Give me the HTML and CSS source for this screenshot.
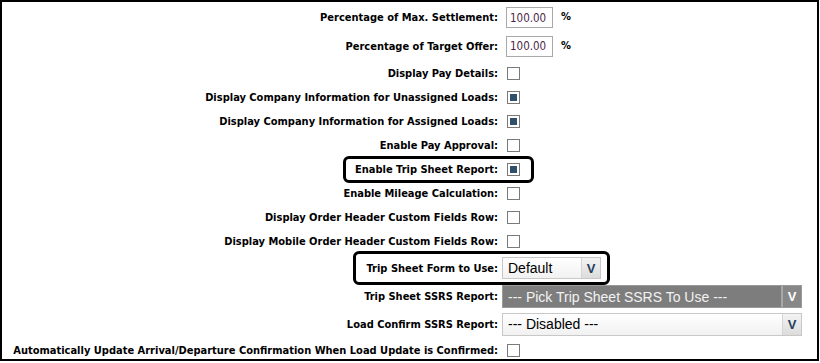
FILE: index.html
```html
<!DOCTYPE html>
<html>
<head>
<meta charset="utf-8">
<link rel="stylesheet" href="styles.css">
</head>
<body>
<div class="frame">
  <div class="row h27">
    <span class="lbl">Percentage of Max. Settlement:</span>
    <div class="ctl"><input class="num" type="text" value="100.00"><span class="pct">%</span></div>
  </div>
  <div class="row h30">
    <span class="lbl">Percentage of Target Offer:</span>
    <div class="ctl"><input class="num" type="text" value="100.00"><span class="pct">%</span></div>
  </div>
  <div class="row h24">
    <span class="lbl">Display Pay Details:</span>
    <div class="ctl"><span class="cb"></span></div>
  </div>
  <div class="row h24">
    <span class="lbl">Display Company Information for Unassigned Loads:</span>
    <div class="ctl"><span class="cb on"></span></div>
  </div>
  <div class="row h24">
    <span class="lbl">Display Company Information for Assigned Loads:</span>
    <div class="ctl"><span class="cb on"></span></div>
  </div>
  <div class="row h24">
    <span class="lbl">Enable Pay Approval:</span>
    <div class="ctl"><span class="cb"></span></div>
  </div>
  <div class="row h24">
    <span class="lbl">Enable Trip Sheet Report:</span>
    <div class="ctl"><span class="cb on"></span></div>
    <div class="mark mark1"></div>
  </div>
  <div class="row h24">
    <span class="lbl">Enable Mileage Calculation:</span>
    <div class="ctl"><span class="cb"></span></div>
  </div>
  <div class="row h24">
    <span class="lbl">Display Order Header Custom Fields Row:</span>
    <div class="ctl"><span class="cb"></span></div>
  </div>
  <div class="row h24">
    <span class="lbl">Display Mobile Order Header Custom Fields Row:</span>
    <div class="ctl"><span class="cb"></span></div>
  </div>
  <div class="row h30">
    <span class="lbl">Trip Sheet Form to Use:</span>
    <div class="ctl">
      <div class="sel light short"><span class="val">Default</span><span class="btn">V</span></div>
    </div>
    <div class="mark mark2"></div>
  </div>
  <div class="row h27">
    <span class="lbl">Trip Sheet SSRS Report:</span>
    <div class="ctl">
      <div class="sel dark wide"><span class="val">--- Pick Trip Sheet SSRS To Use ---</span><span class="btn">V</span></div>
    </div>
  </div>
  <div class="row h28">
    <span class="lbl">Load Confirm SSRS Report:</span>
    <div class="ctl">
      <div class="sel light wide"><span class="val">--- Disabled ---</span><span class="btn">V</span></div>
    </div>
  </div>
  <div class="row h24">
    <span class="lbl">Automatically Update Arrival/Departure Confirmation When Load Update is Confirmed:</span>
    <div class="ctl"><span class="cb"></span></div>
  </div>
</div>
</body>
</html>
```

FILE: styles.css
```css
html, body {
  margin: 0;
  padding: 0;
  background: #fff;
}

body {
  font-family: "DejaVu Sans Condensed", "DejaVu Sans", sans-serif;
  font-stretch: condensed;
}

.frame {
  position: relative;
  width: 819px;
  height: 361px;
  box-sizing: border-box;
  border: 2px solid #000;
  padding-top: 2px;
}

.row {
  position: relative;
  display: flex;
  align-items: center;
}

.h24 { height: 24px; }
.h27 { height: 27px; }
.h28 { height: 28px; }
.h30 { height: 30px; }

.lbl {
  width: 496px;
  flex: none;
  text-align: right;
  font-size: 11px;
  font-weight: bold;
  color: #000;
  white-space: nowrap;
}

.ctl {
  margin-left: 4px;
  display: flex;
  align-items: center;
}

.num {
  margin: 0 0 0 4px;
  width: 47px;
  height: 21px;
  box-sizing: border-box;
  border: 1px solid #a9a9a9;
  padding: 0 0 0 3px;
  font-family: "DejaVu Sans Condensed", "DejaVu Sans", sans-serif;
  font-stretch: condensed;
  font-size: 11.5px;
  color: #4e1f48;
  background: #fff;
  outline: none;
}

.pct {
  margin-left: 8px;
  margin-top: -2px;
  font-size: 11px;
  font-weight: bold;
}

.cb {
  margin-left: 5px;
  width: 13px;
  height: 13px;
  box-sizing: border-box;
  border: 1px solid #7a7a7a;
  background: #fff;
  display: flex;
  align-items: center;
  justify-content: center;
}

.cb.on::after {
  content: "";
  width: 7px;
  height: 7px;
  background: #2f4f6b;
}

.sel {
  display: flex;
  align-items: stretch;
  box-sizing: border-box;
  border: 1px solid #c8c8c8;
  font-family: "Liberation Sans", Arial, sans-serif;
  font-stretch: normal;
  font-size: 14px;
}

.sel.short {
  width: 99px;
  height: 22px;
}

.sel.wide {
  width: 300px;
  height: 23px;
}

.sel .val {
  flex: 1;
  display: flex;
  align-items: center;
  padding-left: 5px;
  white-space: nowrap;
}

.sel .btn {
  width: 18px;
  flex: none;
  display: flex;
  align-items: center;
  justify-content: center;
  font-family: "Liberation Sans", Arial, sans-serif;
  font-weight: bold;
  font-size: 13px;
}

.sel.light {
  background: linear-gradient(#ffffff, #f1f1f1);
  color: #000;
}

.sel.light .btn {
  border-left: 1px solid #d4d4d4;
  background: linear-gradient(#f3f3f3, #dcdcdc);
  color: #24405c;
}

.sel.dark {
  background: #7d7d7d;
  border-color: #9a9a9a;
  color: #f2f2f2;
}

.sel.dark .btn {
  border-left: 2px solid #a8a8a8;
  background: #878787;
  color: #fff;
}

.mark {
  position: absolute;
  box-sizing: border-box;
  border: 3px solid #000;
  border-radius: 6px;
  pointer-events: none;
}

.mark1 {
  left: 341px;
  top: -1px;
  width: 191px;
  height: 27px;
}

.mark2 {
  left: 351px;
  top: -2px;
  width: 257px;
  height: 34px;
}
```
